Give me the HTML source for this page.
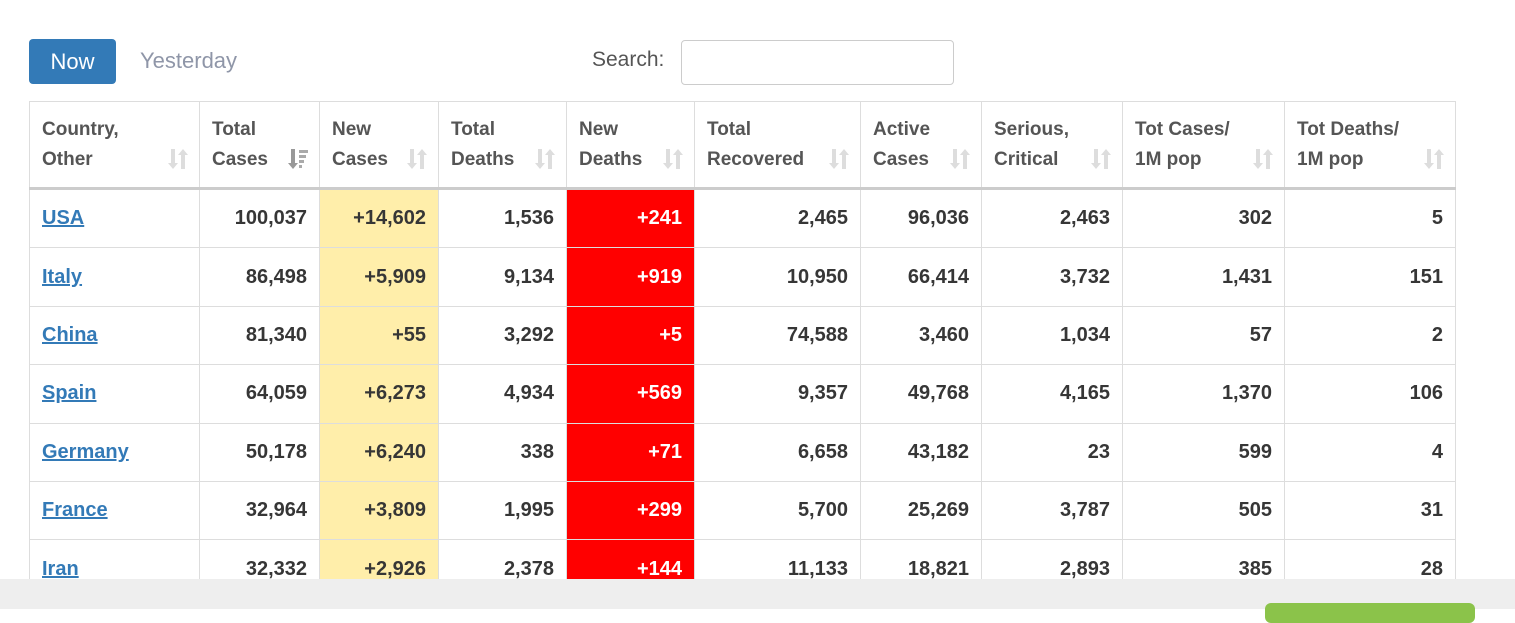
<!DOCTYPE html><html><head><style>
body{margin:0;width:1515px;height:609px;overflow:hidden;background:#fff;font-family:"Liberation Sans",Arial,sans-serif;position:relative}
.now{position:absolute;left:29px;top:39px;width:87px;height:45px;background:#337ab7;border-radius:4px;color:#fff;font-size:22px;line-height:45px;text-align:center}
.yest{position:absolute;left:140px;top:48px;color:#8f96a8;font-size:22px}
.sl{position:absolute;left:592px;top:48px;color:#555;font-size:21px}
.si{position:absolute;left:681px;top:40px;width:271px;height:43px;border:1px solid #ccc;border-radius:4px}
table{position:absolute;left:29px;top:101px;border-collapse:collapse;table-layout:fixed}
td,th{border:1px solid #ddd;font-size:20px;font-weight:bold;padding:0 12px;color:#363636}
th{height:85px;text-align:left;color:#555;line-height:30px;vertical-align:middle;position:relative;border-bottom:3px solid #ccc;font-size:19px}
th svg{position:absolute;right:11px;bottom:17px}
td{height:57.4px;text-align:right}
td:first-child{text-align:left}
td a{color:#337ab7;text-decoration:underline}
.y{background:#ffeeaa}.r{background:#f00;color:#fff}
.foot{position:absolute;left:0;top:579px;width:1515px;height:30px;background:#eee}
.g{position:absolute;left:1265px;top:603px;width:210px;height:20px;background:#8bc34a;border-radius:6px}
</style></head><body>
<svg width="0" height="0" style="position:absolute"><defs>
<g id="s" fill="#ddd"><rect x="3" y="1" width="4" height="15"/><polygon points="0,15 10,15 5,21"/><rect x="13" y="6" width="4" height="15"/><polygon points="10,7 20,7 15,1"/></g>
<g id="d"><g fill="#999"><rect x="3" y="1" width="4" height="15"/><polygon points="0,15 10,15 5,21"/></g><g fill="#aaa"><rect x="11" y="2" width="9" height="3"/><rect x="11" y="7" width="7" height="3"/><rect x="11" y="12" width="5" height="3"/><rect x="11" y="17" width="3" height="3"/></g></g>
</defs></svg>
<div class="now">Now</div><div class="yest">Yesterday</div>
<div class="sl">Search:</div><div class="si"></div>
<table>
<colgroup><col style="width:170px"><col style="width:120px"><col style="width:119px"><col style="width:128px"><col style="width:128px"><col style="width:166px"><col style="width:121px"><col style="width:141px"><col style="width:162px"><col style="width:171px"></colgroup>
<tr><th>Country,<br>Other<svg width="20" height="22"><use href="#s"/></svg></th><th>Total<br>Cases<svg width="20" height="22"><use href="#d"/></svg></th><th>New<br>Cases<svg width="20" height="22"><use href="#s"/></svg></th><th>Total<br>Deaths<svg width="20" height="22"><use href="#s"/></svg></th><th>New<br>Deaths<svg width="20" height="22"><use href="#s"/></svg></th><th>Total<br>Recovered<svg width="20" height="22"><use href="#s"/></svg></th><th>Active<br>Cases<svg width="20" height="22"><use href="#s"/></svg></th><th>Serious,<br>Critical<svg width="20" height="22"><use href="#s"/></svg></th><th>Tot Cases/<br>1M pop<svg width="20" height="22"><use href="#s"/></svg></th><th>Tot Deaths/<br>1M pop<svg width="20" height="22"><use href="#s"/></svg></th></tr>
<tr><td><a>USA</a></td><td>100,037</td><td class="y">+14,602</td><td>1,536</td><td class="r">+241</td><td>2,465</td><td>96,036</td><td>2,463</td><td>302</td><td>5</td></tr>
<tr><td><a>Italy</a></td><td>86,498</td><td class="y">+5,909</td><td>9,134</td><td class="r">+919</td><td>10,950</td><td>66,414</td><td>3,732</td><td>1,431</td><td>151</td></tr>
<tr><td><a>China</a></td><td>81,340</td><td class="y">+55</td><td>3,292</td><td class="r">+5</td><td>74,588</td><td>3,460</td><td>1,034</td><td>57</td><td>2</td></tr>
<tr><td><a>Spain</a></td><td>64,059</td><td class="y">+6,273</td><td>4,934</td><td class="r">+569</td><td>9,357</td><td>49,768</td><td>4,165</td><td>1,370</td><td>106</td></tr>
<tr><td><a>Germany</a></td><td>50,178</td><td class="y">+6,240</td><td>338</td><td class="r">+71</td><td>6,658</td><td>43,182</td><td>23</td><td>599</td><td>4</td></tr>
<tr><td><a>France</a></td><td>32,964</td><td class="y">+3,809</td><td>1,995</td><td class="r">+299</td><td>5,700</td><td>25,269</td><td>3,787</td><td>505</td><td>31</td></tr>
<tr><td><a>Iran</a></td><td>32,332</td><td class="y">+2,926</td><td>2,378</td><td class="r">+144</td><td>11,133</td><td>18,821</td><td>2,893</td><td>385</td><td>28</td></tr>
</table>
<div class="foot"></div><div class="g"></div>
</body></html>
